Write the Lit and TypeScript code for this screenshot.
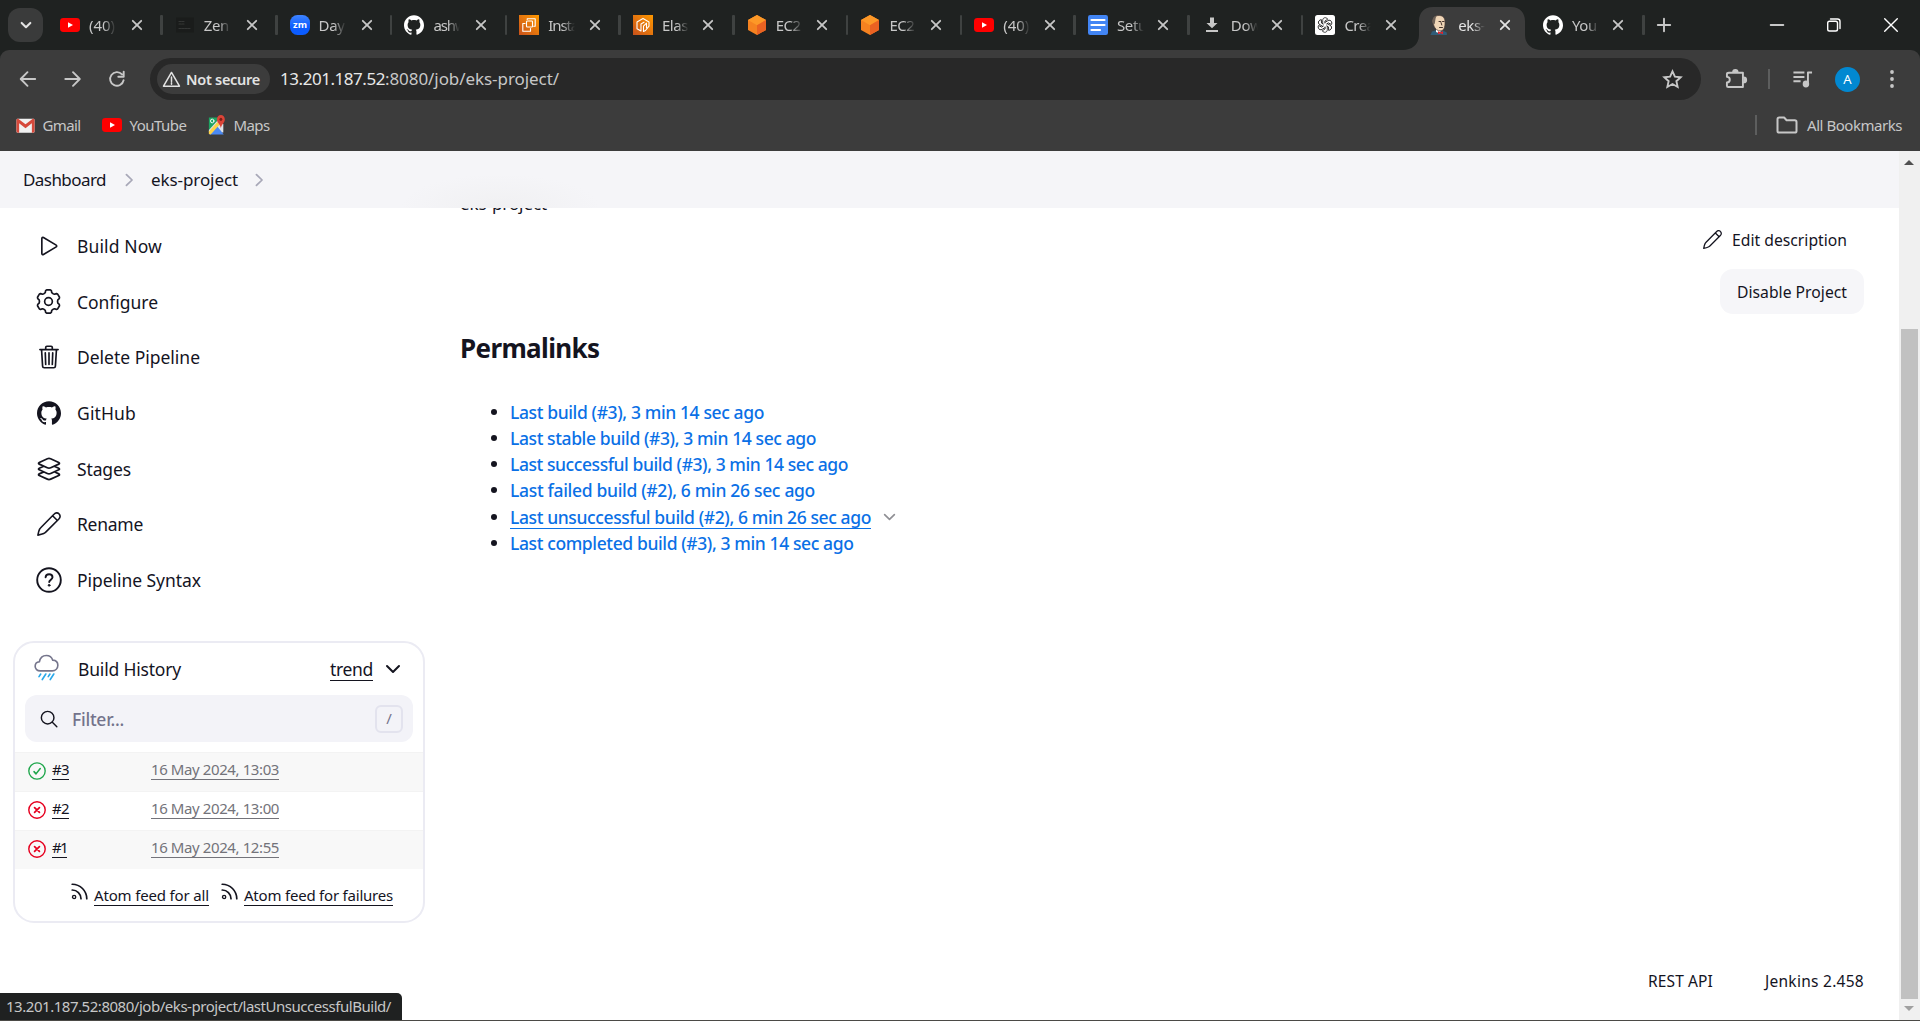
import { LitElement, html, css, svg } from "lit";
import { customElement, property } from "lit/decorators.js";
import { classMap } from "lit/directives/class-map.js";

/* ---------- icons ---------- */

const GITHUB =
  "M12 .297c-6.63 0-12 5.373-12 12 0 5.303 3.438 9.8 8.205 11.385.6.113.82-.258.82-.577 0-.285-.01-1.04-.015-2.04-3.338.724-4.042-1.61-4.042-1.61C4.422 18.07 3.633 17.7 3.633 17.7c-1.087-.744.084-.729.084-.729 1.205.084 1.838 1.236 1.838 1.236 1.07 1.835 2.809 1.305 3.495.998.108-.776.417-1.305.76-1.605-2.665-.3-5.466-1.332-5.466-5.93 0-1.31.465-2.38 1.235-3.22-.135-.303-.54-1.523.105-3.176 0 0 1.005-.322 3.3 1.23.96-.267 1.98-.399 3-.405 1.02.006 2.04.138 3 .405 2.28-1.552 3.285-1.23 3.285-1.23.645 1.653.24 2.873.12 3.176.765.84 1.23 1.91 1.23 3.22 0 4.61-2.805 5.625-5.475 5.92.42.36.81 1.096.81 2.22 0 1.606-.015 2.896-.015 3.286 0 .315.21.69.825.57C20.565 22.092 24 17.592 24 12.297c0-6.627-5.373-12-12-12";

/** Outline of a six-lobed gear centred on (12, 12). */
const gearPath = (() => {
  const pts: Array<[number, number]> = [];
  for (let k = 0; k < 6; k++) {
    const base = k * 60 - 90;
    pts.push([base - 15, 10.7], [base - 9, 11.3], [base + 9, 11.3], [base + 15, 10.7], [base + 20, 9.1], [base + 30, 8.7], [base + 40, 9.1]);
  }
  return (
    pts
      .map(([a, r], i) => {
        const t = (a * Math.PI) / 180;
        return `${i ? "L" : "M"}${(12 + r * Math.cos(t)).toFixed(2)} ${(12 + r * Math.sin(t)).toFixed(2)}`;
      })
      .join("") + "Z"
  );
})();

const pencil = svg`<path d="M.9 23.1C1.3 21 1.7 19 2.6 17.2 3 16.4 3.6 15.8 4.2 15.2L17 2.2C18.600 .5 20.600 .4 22 1.800 23.500 3.200 23.500 5.400 21.900 7L9 19.900C8.300 20.600 7.500 21.200 6.700 21.500 4.900 22.300 3 22.700 .9 23.100ZM15.600 3.700L20.400 8.500"/>`;

const youtube = svg`<rect x="0" y="3" width="20" height="14" rx="3.4" fill="#f00"/><path d="M8 7.200L13 10 8 12.800z" fill="#fff"/>`;
const cube = svg`<path d="M10 0L19 5v10l-9 5-9-5V5z" fill="#f58220"/><path d="M10 0L19 5l-9 5.200L1 5z" fill="#fd9827"/><path d="M10 10.200L19 5v10l-9 5z" fill="#ea6222"/>`;
const awsBg = svg`<linearGradient id="g" x1="0" y1="1" x2="1" y2="0"><stop offset="0" stop-color="#c8511b"/><stop offset="1" stop-color="#f90"/></linearGradient><rect width="20" height="20" fill="url(#g)"/>`;

const ICONS: Record<string, { box: string; art: unknown; line?: number }> = {
  youtube: { box: "0 0 20 20", art: youtube },
  zen: {
    box: "0 0 20 20",
    art: svg`<rect x="1" y="2.500" width="18" height="15" fill="#1a1c1b" stroke="#303231"/><path d="M4 6.500h5M4 9h5M4 13.500h12" stroke="#343635" stroke-width="1.200" stroke-dasharray="2 1"/>`,
  },
  zoom: {
    box: "0 0 20 20",
    art: svg`<linearGradient id="z" x1="0" y1="0" x2="0" y2="1"><stop offset="0" stop-color="#3f84ff"/><stop offset=".6" stop-color="#0b5cff"/></linearGradient><rect width="20" height="20" rx="7.500" fill="url(#z)"/><text x="10" y="13" text-anchor="middle" font-family="Open Sans, sans-serif" font-weight="700" font-size="9.500" fill="#fff">zm</text>`,
  },
  githubLight: { box: "0 0 24 24", art: svg`<path d=${GITHUB} fill="#fff"/>` },
  ec2: {
    box: "0 0 20 20",
    art: svg`${awsBg}<g fill="none" stroke="#fff" stroke-width="1.100"><rect x="7.500" y="6" width="6" height="6" rx=".8"/><path d="M8.200 4.500V3.800h8v7.500h-1.500M6 8.500H3.800v7.700h7.700v-2.700"/></g>`,
  },
  eks: {
    box: "0 0 20 20",
    art: svg`${awsBg}<g fill="none" stroke="#fff" stroke-width="1.100" stroke-linejoin="round"><path d="M8 16L4 13.700V6.900L10 3.500l6 3.400v4.300L12.500 15.500 10.500 16.500V11.200L13.500 8.200v4.500M8 16V9l3-1.800"/></g>`,
  },
  cube: { box: "0 0 20 20", art: cube },
  docs: {
    box: "0 0 20 20",
    art: svg`<rect width="20" height="20" rx="2.200" fill="#4285f4"/><path d="M3.500 5H16.500M3.500 10H16.500M3.500 15H12" stroke="#fff" stroke-width="2.200"/>`,
  },
  download: {
    box: "0 0 20 20",
    art: svg`<path d="M8 2.500h4v5.500h3.500L10 13.300 4.500 8H8zM4 15h12v2H4z" fill="#c7c7c7"/>`,
  },
  gpt: {
    box: "0 0 20 20",
    art: svg`<rect width="20" height="20" rx="2.500" fill="#fff"/><g fill="none" stroke="#222" stroke-width=".85">${[0, 60, 120, 180, 240, 300].map(
      (a) => svg`<path transform="rotate(${a} 10 10)" d="M7.700 8.600V5.500C7.600 3.600 8.900 2.600 10.400 2.700 11.500 2.800 12.300 3.300 12.800 4.200L9.900 6V8"/>`
    )}</g>`,
  },
  jenkins: {
    box: "0 0 20 20",
    art: svg`<path d="M1.500 20L3 16.500 8 15l6 .5 3.800 2V20z" fill="#2f5c78"/><path d="M7 13l5 1.500-1 4-4-1.500z" fill="#fff"/><path d="M3.700 7C3.500 2.500 6.500 .3 10.300 .5 14 .6 16 3 16 7c.2 2.800-.2 5-1.200 7-1 1.800-3.300 2.200-5.300 1.700C6.500 14.600 5 12 4.500 9.500z" fill="#f0d6b7" stroke="#4a3a33" stroke-width=".7"/><path d="M3.600 8C2.800 4 5 .7 8 .6 6.500 2 6.500 4.500 5.800 8.500L4.600 10z" fill="#6f6258"/><path d="M10 6.500h1.800M13.500 6.500h1.500M12 7.500l.8 2.500M10.500 12.500h3" stroke="#33231e" stroke-width=".9"/><path d="M9 16.300l2.500 1 2.500-1v2.900l-2.500-.9-2.500.9z" fill="#e0242b"/>`,
  },
  gmail: {
    box: "0 0 20 20",
    art: svg`<rect x=".5" y="3" width="19" height="14.500" rx="1.300" fill="#f1f1f1"/><path d="M.5 4.500V16a1.500 1.500 0 0 0 1.500 1.500h1.300V7.500L10 12.800l6.700-5.300v10H18a1.500 1.500 0 0 0 1.500-1.500V4.500C19.500 3 18 2.500 17 3.300L10 8.800 3 3.300C2 2.500.5 3 .5 4.500z" fill="#d6493b"/>`,
  },
  maps: {
    box: "0 0 20 20",
    art: svg`<path d="M1 2.500h12L1 16z" fill="#1fa463"/><path d="M1 17.500V15L12 4l5 5v8.500z" fill="#dfe3e8"/><path d="M1.500 19.500L10 11l7.500 8.500z" fill="#4a89f3"/><path d="M1 16.500L10.500 7 13 9.500 3 19.500 1 19z" fill="#fdd247"/><circle cx="4.700" cy="6" r="1.900" fill="none" stroke="#fff" stroke-width="1"/><path d="M14.300 0a4.400 4.400 0 0 1 4.400 4.400c0 3-3.200 4.300-4.400 8.600-1.200-4.300-4.400-5.600-4.400-8.600A4.400 4.400 0 0 1 14.300 0z" fill="#dc4437"/><circle cx="14.300" cy="4.300" r="1.600" fill="#7c1f17"/>`,
  },
  close: { box: "0 0 20 20", line: 2, art: svg`<path d="M5.300 5.300l9.400 9.400M14.700 5.300l-9.400 9.400"/>` },
  plus: { box: "0 0 20 20", line: 1.9, art: svg`<path d="M10 3.800v12.400M3.800 10h12.400"/>` },
  tabSearch: { box: "0 0 20 20", line: 2.3, art: svg`<path d="M5.200 7.700L10 12.500l4.800-4.800"/>` },
  minimize: { box: "0 0 20 20", line: 1.5, art: svg`<path d="M3.500 10h13"/>` },
  restore: { box: "0 0 20 20", line: 1.4, art: svg`<rect x="3.700" y="6.200" width="9.800" height="9.800" rx="1.800"/><path d="M6.500 4h7A2.500 2.500 0 0 1 16 6.500v7"/>` },
  winClose: { box: "0 0 20 20", line: 1.4, art: svg`<path d="M3.700 3.700l12.600 12.600M16.300 3.700L3.700 16.300"/>` },
  back: { box: "0 0 20 20", line: 1.9, art: svg`<path d="M17.200 10H3.500M9.500 3.200L2.700 10l6.800 6.800"/>` },
  forward: { box: "0 0 20 20", line: 1.9, art: svg`<path d="M2.300 10h14.200M10 3.200l6.800 6.800-6.800 6.800"/>` },
  reload: { box: "0 0 20 20", line: 1.9, art: svg`<path d="M16.600 11.300A6.800 6.800 0 1 1 15 5.400M16.700 2.600v5.200h-5.400"/>` },
  warning: { box: "0 0 20 20", line: 1.6, art: svg`<path d="M10 2.600L18.400 17H1.600zM10 7.500v4.600M10 13.500v1.600"/>` },
  star: { box: "0 0 20 20", line: 1.8, art: svg`<path d="M10 2.200l2.300 5.100 5.500.6-4.100 3.700 1.200 5.500L10 14.300l-4.900 2.800 1.200-5.500L2.200 7.900l5.500-.6z" stroke-linejoin="miter"/>` },
  puzzle: {
    box: "0 0 24 24",
    line: 2,
    art: svg`<path d="M4 5h14.700v14.800H3.300c-.8 0-1.300-.5-1.300-1.300v-3.300c1.800-.2 3-1.300 3-3s-1.200-2.800-3-3V6.500C2 5.500 2.500 5 4 5z" /><path d="M8.500 4.300a2.300 2.300 0 0 1 4.600 0M19.500 9.800a2.600 2.600 0 0 1 0 5.200" fill="currentColor"/>`,
  },
  music: {
    box: "0 0 22 20",
    line: 2,
    art: svg`<path d="M1.500 3.500H13M1.500 8H13M1.500 12.300H9M16.700 15V3.600H21" stroke-linecap="butt"/><circle cx="14.600" cy="15" r="2.400" fill="currentColor"/>`,
  },
  dots: { box: "0 0 20 20", art: svg`<g fill="#c7c7c7"><circle cx="10" cy="3" r="1.900"/><circle cx="10" cy="10" r="1.900"/><circle cx="10" cy="17" r="1.900"/></g>` },
  folder: { box: "0 0 22 20", line: 2, art: svg`<path d="M1.500 4.200c0-1 .7-1.700 1.700-1.700h4.900l2.500 2.700h8.200c1 0 1.700.7 1.700 1.700v9c0 1-.7 1.600-1.700 1.600H3.200c-1 0-1.700-.6-1.700-1.600z"/>` },
  crumb: { box: "0 0 10 16", line: 2, art: svg`<path d="M1.600 1.800L7.800 8l-6.200 6.200"/>` },
  play: {
    box: "0 0 512 512",
    line: 32,
    art: svg`<path d="M112 111v290c0 17.440 17 28.520 31 20.160l247.900-148.370c12.120-7.250 12.120-26.330 0-33.580L143 90.840c-14-8.360-31 2.720-31 20.160z" transform="translate(-20 -26) scale(1.100)"/>`,
  },
  gear: { box: "0 0 24 24", line: 1.6, art: svg`<path d=${gearPath}/><circle cx="12" cy="12" r="3.700"/>` },
  trash: {
    box: "24 24 464 464",
    line: 32,
    art: svg`<path d="M112 112l20 320c.95 18.490 14.400 32 32 32h184c17.670 0 30.870-13.510 32-32l20-320M80 112h352M192 112V72a24 24 0 0124-24h80a24 24 0 0124 24v40M256 176v224M184 176l8 224M328 176l-8 224"/>`,
  },
  github: { box: "0 0 24 24", art: svg`<path d=${GITHUB} fill="#14141f"/>` },
  layers: {
    box: "36 36 440 440",
    line: 32,
    art: svg`<path d="M434.800 137.650l-149.360-68.100c-16.190-7.400-42.690-7.400-58.880 0L77.300 137.650c-17.600 8-17.600 21.090 0 29.090l148 67.500c16.890 7.700 44.690 7.700 61.580 0l148-67.500c17.520-8 17.520-21.100-.08-29.090zM160 308.520l-82.700 37.110c-17.600 8-17.600 21.100 0 29.100l148 67.500c16.890 7.690 44.690 7.690 61.580 0l148-67.500c17.600-8 17.600-21.100 0-29.100l-79.940-38.470M160 204.480l-82.800 37.160c-17.600 8-17.600 21.100 0 29.100l148 67.490c16.890 7.700 44.690 7.700 61.580 0l148-67.490c17.700-8 17.700-21.100.1-29.100L352 204.480"/>`,
  },
  pencil: { box: "0 0 24 24", line: 1.6, art: pencil },
  help: {
    box: "0 0 26 26",
    line: 1.9,
    art: svg`<circle cx="13" cy="13" r="11.800"/><path d="M9.600 10.300c.1-1.900 1.600-3 3.500-3 2 0 3.400 1.200 3.400 2.900 0 2.300-3.300 2.600-3.300 4.900"/><circle cx="13.100" cy="18.300" r=".9" fill="currentColor" stroke-width="1"/>`,
  },
  rain: {
    box: "0 0 26 28",
    line: 1.7,
    art: svg`<path d="M6.500 17.500C3.300 17.500 1.200 15.400 1.200 12.700c0-2.600 1.900-4.300 4.400-4.600C6.300 4 9.300 1.500 12.900 1.500c3.200 0 5.600 1.900 6.600 4.900 3.200.2 5.300 2.300 5.300 5.300 0 3.300-2.500 5.800-5.800 5.800z" stroke="#75758c"/><path d="M7 20.800l-1.800 2.700M12.300 20.800L8.600 26.500M16.600 20.800l-1.800 2.700M20.600 20.800l-3.700 5.700" stroke="#2aa8ea"/>`,
  },
  chevron: { box: "0 0 16 10", line: 2, art: svg`<path d="M2 2l6 6 6-6"/>` },
  search: { box: "0 0 20 20", line: 1.6, art: svg`<circle cx="8.500" cy="8.500" r="7"/><path d="M13.700 13.700l5 5"/>` },
  ok: { box: "0 0 20 20", line: 1.5, art: svg`<circle cx="10" cy="10" r="9.100"/><path d="M6.700 10.700l2.200 2.500 4.700-6" stroke-width="1.700"/>` },
  fail: { box: "0 0 20 20", line: 1.6, art: svg`<circle cx="10" cy="10" r="9.100"/><path d="M7.300 7.300l5.400 5.400M12.700 7.300l-5.400 5.400" stroke-width="1.900"/>` },
  rss: {
    box: "0 0 18 18",
    line: 1.8,
    art: svg`<circle cx="3.300" cy="14.800" r="1.700" stroke-width="1.500"/><path d="M1.300 7.400c5.100 0 9.300 4.200 9.300 9.300M1.300 1.300c8.500 0 15.400 6.900 15.400 15.400"/>`,
  },
};

@customElement("ui-icon")
export class UiIcon extends LitElement {
  @property() name = "";
  @property({ type: Number }) w = 20;
  @property({ type: Number }) h = 0;

  static styles = css`
    :host {
      display: inline-flex;
      flex: none;
    }
    svg {
      display: block;
      overflow: visible;
    }
  `;

  render() {
    const icon = ICONS[this.name];
    const lined = icon.line !== undefined;
    return html`<svg
      width=${this.w}
      height=${this.h || this.w}
      viewBox=${icon.box}
      preserveAspectRatio="none"
      fill=${lined ? "none" : "currentColor"}
      stroke=${lined ? "currentColor" : "none"}
      stroke-width=${icon.line ?? 0}
      stroke-linecap="round"
      stroke-linejoin="round"
    >
      ${icon.art}
    </svg>`;
  }
}

/** A single line of text tracked so that it fills exactly `w` pixels. */
@customElement("text-run")
export class TextRun extends LitElement {
  @property() text = "";
  @property({ type: Number }) w = 0;

  static styles = css`
    :host {
      display: inline-block;
      flex: none;
      white-space: nowrap;
    }
    .run {
      display: inline-block;
    }
  `;

  updated() {
    const run = this.renderRoot.querySelector<HTMLElement>(".run");
    if (!run || !this.w) return;
    run.style.letterSpacing = "0px";
    const natural = run.getBoundingClientRect().width;
    const gap = (this.w - natural) / this.text.length;
    run.style.letterSpacing = `${gap.toFixed(3)}px`;
  }

  render() {
    return html`<span class="run">${this.text}</span>`;
  }
}

/* ---------- data ---------- */

const TABS: Array<[string, string, number]> = [
  ["youtube", "(40)", 26],
  ["zen", "Zen", 25],
  ["zoom", "Day", 26],
  ["githubLight", "ashw", 32],
  ["ec2", "Insta", 30],
  ["eks", "Elas", 26],
  ["cube", "EC2", 25],
  ["cube", "EC2", 25],
  ["youtube", "(40)", 26],
  ["docs", "Setu", 30],
  ["download", "Dow", 31],
  ["gpt", "Crea", 30],
  ["jenkins", "eks-", 27],
  ["githubLight", "You", 25],
];
const ACTIVE_TAB = 12;

const TASKS: Array<[string, string, number, number]> = [
  ["play", "Build Now", 85, 24],
  ["gear", "Configure", 81, 25],
  ["trash", "Delete Pipeline", 123, 24],
  ["github", "GitHub", 59, 24],
  ["layers", "Stages", 54, 24],
  ["pencil", "Rename", 66, 24],
  ["help", "Pipeline Syntax", 124, 26],
];

const BUILDS = [
  { icon: "ok", no: "#3", nw: 17, date: "16 May 2024, 13:03" },
  { icon: "fail", no: "#2", nw: 17, date: "16 May 2024, 13:00" },
  { icon: "fail", no: "#1", nw: 15, date: "16 May 2024, 12:55" },
];

const LINKS: Array<[string, number]> = [
  ["Last build (#3), 3 min 14 sec ago", 254],
  ["Last stable build (#3), 3 min 14 sec ago", 306],
  ["Last successful build (#3), 3 min 14 sec ago", 338],
  ["Last failed build (#2), 6 min 26 sec ago", 305],
  ["Last unsuccessful build (#2), 6 min 26 sec ago", 361],
  ["Last completed build (#3), 3 min 14 sec ago", 343.5],
];
const HOVERED_LINK = 4;

/* ---------- browser chrome ---------- */

@customElement("browser-chrome")
export class BrowserChrome extends LitElement {
  static styles = css`
    :host {
      display: block;
      flex: none;
      height: 151px;
      background: #1f2221;
      color: #c7c7c7;
      font-size: 15px;
      line-height: 20px;
      overflow: hidden;
    }
    .strip {
      display: flex;
      height: 50px;
      align-items: center;
    }
    .search {
      display: flex;
      align-items: center;
      justify-content: center;
      width: 35px;
      height: 34px;
      margin: 0 3.500px 0 8px;
      border-radius: 12px;
      background: #3a3b3b;
      color: #e3e3e3;
    }
    .tab {
      position: relative;
      box-sizing: border-box;
      display: flex;
      flex: none;
      align-items: center;
      width: 113.750px;
      height: 50px;
      padding-left: 13.500px;
    }
    .tab:nth-child(-n + 5) {
      width: 114.800px;
    }
    .tab:nth-child(-n + 5) .title {
      margin-right: 7px;
    }
    .title {
      width: 32px;
      margin: 0 5.500px 0 9px;
      white-space: nowrap;
      -webkit-mask-image: linear-gradient(90deg, #000 45%, transparent 84%);
      mask-image: linear-gradient(90deg, #000 45%, transparent 84%);
    }
    .sep {
      position: absolute;
      right: -1.500px;
      top: 15px;
      width: 2.500px;
      height: 20px;
      background: #3f4241;
      border-radius: 1px;
    }
    .bg {
      position: absolute;
      left: -13px;
      top: 7px;
      z-index: 0;
    }
    .tab > ui-icon,
    .tab > .title {
      z-index: 1;
    }
    .tab.active {
      color: #e3e3e3;
    }
    .add {
      margin-left: 11px;
    }
    .window {
      display: flex;
      gap: 37px;
      margin-left: auto;
      padding-right: 19px;
      color: #fff;
    }
    .bars {
      height: 101px;
      background: #3c3c3c;
      border-radius: 9px 9px 0 0;
    }
    .toolbar {
      display: flex;
      align-items: center;
      height: 58px;
      padding-left: 18px;
    }
    .nav {
      display: flex;
      gap: 24.500px;
      width: 132px;
    }
    .omnibox {
      display: flex;
      box-sizing: border-box;
      align-items: center;
      width: 1551px;
      height: 42px;
      padding: 0 18px 0 7px;
      border-radius: 21px;
      background: #282828;
    }
    .chip {
      display: flex;
      box-sizing: border-box;
      align-items: center;
      gap: 5px;
      width: 113px;
      height: 30px;
      padding-left: 5px;
      border-radius: 15px;
      background: #3c3c3c;
      color: #e3e3e3;
      font-size: 14.500px;
      font-weight: 600;
    }
    .url {
      flex: 1;
      padding-left: 10px;
      font-size: 17px;
      line-height: 22px;
    }
    .host {
      color: #e8e8e8;
    }
    .actions {
      display: flex;
      align-items: center;
      padding-left: 24px;
    }
    .rule {
      width: 2px;
      height: 20px;
      background: #5d5e5e;
    }
    .rule.first {
      margin: 0 22px 0 20px;
    }
    .avatar {
      width: 25px;
      height: 25px;
      margin: 0 21.500px 0 22px;
      border-radius: 50%;
      background: #0288d1;
      color: #fff;
      font-size: 13px;
      line-height: 25px;
      text-align: center;
    }
    .bookmarks {
      display: flex;
      align-items: center;
      height: 34px;
      padding: 0 18px 0 15.500px;
    }
    .mark {
      display: flex;
      align-items: center;
      gap: 8px;
      margin-right: 21px;
    }
    .mark text-run,
    .all text-run {
      margin-top: -1px;
    }
    .all {
      display: flex;
      align-items: center;
      margin-left: auto;
      gap: 9px;
    }
    .all .rule {
      margin-right: 10px;
    }
  `;

  render() {
    return html`
      <div class="strip">
        <div class="search"><ui-icon name="tabSearch" w="18"></ui-icon></div>
        ${TABS.map(([icon, title, w], i) => {
          const active = i === ACTIVE_TAB;
          return html`<div class=${classMap({ tab: true, active })}>
            ${active
              ? html`<svg class="bg" width="140" height="43" viewBox="0 0 140 43">
                  <path
                    d="M0 43C8 43 16 38 16 28V14C16 6 21 0 30 0H108C117 0 122 6 122 14V28C122 38 130 43 138 43z"
                    fill="#3c3c3c"
                  />
                </svg>`
              : null}
            <ui-icon name=${icon} w="20"></ui-icon>
            <span class="title"><text-run text=${title} w=${w}></text-run></span>
            <ui-icon name="close" w="18"></ui-icon>
            ${active || i === ACTIVE_TAB - 1 ? null : html`<i class="sep"></i>`}
          </div>`;
        })}
        <ui-icon class="add" name="plus" w="20"></ui-icon>
        <div class="window">
          <ui-icon name="minimize" w="20"></ui-icon>
          <ui-icon name="restore" w="20"></ui-icon>
          <ui-icon name="winClose" w="20"></ui-icon>
        </div>
      </div>
      <div class="bars">
        <div class="toolbar">
          <div class="nav">
            <ui-icon name="back" w="20"></ui-icon>
            <ui-icon name="forward" w="20"></ui-icon>
            <ui-icon name="reload" w="20"></ui-icon>
          </div>
          <div class="omnibox">
            <div class="chip"><ui-icon name="warning" w="19"></ui-icon><text-run text="Not secure" w="74"></text-run></div>
            <div class="url"
              ><text-run class="host" text="13.201.187.52" w="105"></text-run
              ><text-run text=":8080/job/eks-project/" w="174"></text-run
            ></div>
            <ui-icon name="star" w="21"></ui-icon>
          </div>
          <div class="actions">
            <ui-icon name="puzzle" w="23"></ui-icon>
            <i class="rule first"></i>
            <ui-icon name="music" w="21" h="20"></ui-icon>
            <span class="avatar">A</span>
            <ui-icon name="dots" w="20"></ui-icon>
          </div>
        </div>
        <div class="bookmarks">
          <div class="mark"><ui-icon name="gmail" w="19"></ui-icon><text-run text="Gmail" w="38"></text-run></div>
          <div class="mark"><ui-icon name="youtube" w="20"></ui-icon><text-run text="YouTube" w="57"></text-run></div>
          <div class="mark"><ui-icon name="maps" w="18" h="20"></ui-icon><text-run text="Maps" w="36"></text-run></div>
          <div class="all">
            <i class="rule"></i>
            <ui-icon name="folder" w="22" h="20"></ui-icon>
            <text-run text="All Bookmarks" w="95"></text-run>
          </div>
        </div>
      </div>
    `;
  }
}

/* ---------- build history card ---------- */

@customElement("build-history")
export class BuildHistory extends LitElement {
  static styles = css`
    :host {
      box-sizing: border-box;
      display: block;
      width: 412px;
      height: 282px;
      border: 2px solid #ebebf3;
      border-radius: 21px;
      font-size: 15px;
      line-height: 20px;
    }
    .head {
      display: flex;
      align-items: center;
      height: 52px;
      padding: 0 22px 0 19px;
      font-size: 17.500px;
      line-height: 22px;
    }
    .head .rain {
      margin-bottom: 3px;
    }
    .head .name {
      margin-left: 19px;
    }
    .head .trend {
      margin-left: auto;
      margin-right: 12px;
    }
    .u {
      border-bottom: 1px solid currentColor;
    }
    .filter {
      display: flex;
      box-sizing: border-box;
      align-items: center;
      width: 388px;
      height: 47px;
      margin: 0 0 10px 10px;
      padding: 0 10px 0 15px;
      border-radius: 12px;
      background: #f3f3f8;
    }
    .hint {
      flex: 1;
      padding: 0 0 0 14px;
      color: #73738c;
      font-size: 17.500px;
      font-weight: 500;
      line-height: 22px;
    }
    .key {
      box-sizing: border-box;
      width: 28px;
      height: 28px;
      border: 2px solid #e3e3ee;
      border-radius: 6px;
      color: #73738c;
      line-height: 23px;
      text-align: center;
    }
    .row {
      display: flex;
      box-sizing: border-box;
      align-items: center;
      height: 39px;
      padding-left: 13px;
      border-top: 1px solid #f3f3f3;
    }
    .row:nth-child(odd) {
      background: #f8f8f8;
    }
    .row ui-icon {
      margin-bottom: 2px;
    }
    .ok {
      color: #1ea64b;
    }
    .fail {
      color: #e6001f;
    }
    .no {
      display: flex;
      width: 99px;
      padding-left: 6px;
    }
    .row .u {
      line-height: 19px;
      margin-top: -4px;
    }
    .date {
      color: #73737a;
    }
    .feeds {
      display: flex;
      padding: 14px 0 0 56px;
      gap: 12px;
    }
    .feed {
      display: flex;
      gap: 6px;
    }
    .feed .u {
      margin-top: 2px;
      line-height: 20px;
    }
  `;

  render() {
    return html`
      <div class="head">
        <ui-icon class="rain" name="rain" w="25" h="27"></ui-icon>
        <text-run class="name" text="Build History" w="103"></text-run>
        <text-run class="trend u" text="trend" w="43"></text-run>
        <ui-icon name="chevron" w="16" h="10"></ui-icon>
      </div>
      <div class="filter">
        <ui-icon name="search" w="18"></ui-icon>
        <span class="hint"><text-run text="Filter..." w="52"></text-run></span>
        <span class="key">/</span>
      </div>
      <div>
        ${BUILDS.map(
          (b) => html`<div class="row">
            <ui-icon class=${b.icon} name=${b.icon} w="18"></ui-icon>
            <span class="no"><text-run class="u" text=${b.no} w=${b.nw}></text-run></span>
            <text-run class="date u" text=${b.date} w="128"></text-run>
          </div>`
        )}
      </div>
      <div class="feeds">
        <div class="feed"><ui-icon name="rss" w="17"></ui-icon><text-run class="u" text="Atom feed for all" w="115"></text-run></div>
        <div class="feed"><ui-icon name="rss" w="17"></ui-icon><text-run class="u" text="Atom feed for failures" w="149"></text-run></div>
      </div>
    `;
  }
}

/* ---------- page ---------- */

@customElement("app-root")
export class AppRoot extends LitElement {
  static styles = css`
    :host {
      position: relative;
      display: flex;
      box-sizing: border-box;
      flex-direction: column;
      width: 100%;
      height: 1021px;
      overflow: hidden;
      border-bottom: 1px solid #4b4a46;
      background: #fff;
      color: #14141f;
      font-family: "Noto Sans", "Open Sans", sans-serif;
      font-stretch: 90%;
    }
    .view {
      display: flex;
      flex: 1;
      min-height: 0;
    }
    .page {
      display: flex;
      flex-direction: column;
      width: 1899px;
    }
    .crumbs {
      display: flex;
      box-sizing: border-box;
      align-items: center;
      height: 57px;
      padding: 1px 0 0 23px;
      background: radial-gradient(100px 34px at 500px 57px, #f0f0f2, #f5f5f8);
      font-size: 17px;
      line-height: 22px;
      flex: none;
    }
    .crumbs ui-icon {
      margin: 0 17px 0 19px;
      color: #a8a8b8;
    }
    .crumbs .last {
      margin-left: 17px;
    }
    .body {
      display: flex;
      flex: 1;
    }
    .side {
      width: 460px;
      flex: none;
      font-size: 17.500px;
    }
    .tasks {
      display: grid;
      grid-auto-rows: 55.700px;
      padding: 10.200px 0 0 35px;
      height: 433px;
      box-sizing: border-box;
      align-items: center;
      align-content: start;
    }
    .task {
      display: flex;
      align-items: center;
      height: 56px;
    }
    .slot {
      display: flex;
      justify-content: center;
      width: 27px;
      margin-right: 15px;
    }
    .side build-history {
      margin-left: 13px;
    }
    .main {
      display: flex;
      flex-direction: column;
      flex: 1;
      padding-right: 35px;
    }
    .top {
      display: flex;
      justify-content: space-between;
      height: 106px;
      overflow: hidden;
    }
    .desc {
      margin-top: -16.500px;
      font-size: 17px;
      line-height: 24px;
    }
    .buttons {
      display: flex;
      flex-direction: column;
      align-items: flex-end;
      font-size: 15.700px;
      line-height: 22px;
    }
    .edit {
      display: flex;
      align-items: center;
      gap: 10px;
      height: 24px;
      padding: 20px 17px 17px 0;
    }
    .edit ui-icon {
      margin-bottom: 2px;
    }
    .disable {
      display: flex;
      box-sizing: border-box;
      justify-content: center;
      width: 144px;
      height: 45px;
      padding-top: 12px;
      border-radius: 13px;
      background: #f6f6f9;
    }
    h2 {
      margin: 16px 0 0;
      font-size: 26px;
      font-weight: 700;
      line-height: 36px;
    }
    ul {
      margin: 33px 0 0;
      padding: 0;
      list-style: none;
      font-size: 17.500px;
      font-weight: 500;
      line-height: 26px;
      color: #0a70e6;
    }
    li {
      display: flex;
      align-items: center;
      height: 26px;
      padding-left: 31px;
    }
    li text-run {
      height: 26px;
      line-height: 27px;
    }
    .dot {
      width: 6px;
      height: 6px;
      margin-right: 13px;
      border-radius: 50%;
      background: #14141f;
    }
    li.hover {
      height: 27px;
      padding-top: 1px;
      box-sizing: border-box;
    }
    li.hover text-run {
      height: 23px;
      line-height: 25px;
      border-bottom: 1px solid currentColor;
    }
    li ui-icon {
      margin-left: 12px;
      color: #8f8f94;
    }
    footer {
      display: flex;
      justify-content: flex-end;
      gap: 52px;
      margin-top: auto;
      padding-bottom: 27px;
      font-size: 15.500px;
      line-height: 24px;
    }
    .scroll {
      display: flex;
      flex-direction: column;
      align-items: center;
      flex: 1;
      background: #f0f0f0;
    }
    .thumb {
      width: 17px;
      height: 670px;
      margin-right: 1px;
      background: #c1c1c1;
    }
    .arrow {
      width: 0;
      height: 0;
      border: 5px solid transparent;
    }
    .up {
      margin: 4px 1px 164px 0;
      border-bottom-color: #505050;
    }
    .down {
      margin: 7px 1px 0 0;
      border-top-color: #a0a0a0;
    }
    .status {
      position: absolute;
      left: 0;
      bottom: 0;
      box-sizing: border-box;
      width: 402px;
      height: 27px;
      padding: 3px 0 0 6px;
      border-radius: 0 5px 0 0;
      background: #1f2121;
      color: #c7c7c7;
      font-size: 15px;
      line-height: 20px;
    }
  `;

  render() {
    return html`
      <browser-chrome></browser-chrome>
      <div class="view">
        <div class="page">
          <nav class="crumbs">
            <text-run text="Dashboard" w="83"></text-run>
            <ui-icon name="crumb" w="9" h="14"></ui-icon>
            <text-run text="eks-project" w="87"></text-run>
            <ui-icon class="last" name="crumb" w="9" h="14"></ui-icon>
          </nav>
          <div class="body">
            <div class="side">
              <div class="tasks">
                ${TASKS.map(
                  ([icon, label, w, size]) => html`<div class="task">
                    <span class="slot"><ui-icon name=${icon} w=${size}></ui-icon></span>
                    <text-run text=${label} w=${w}></text-run>
                  </div>`
                )}
              </div>
              <build-history></build-history>
            </div>
            <div class="main">
              <div class="top">
                <text-run class="desc" text="eks-project" w="87"></text-run>
                <div class="buttons">
                  <div class="edit"><ui-icon name="pencil" w="19"></ui-icon><text-run text="Edit description" w="115"></text-run></div>
                  <div class="disable"><text-run text="Disable Project" w="110"></text-run></div>
                </div>
              </div>
              <h2><text-run text="Permalinks" w="139.5"></text-run></h2>
              <ul>
                ${LINKS.map(
                  ([label, w], i) => html`<li class=${classMap({ hover: i === HOVERED_LINK })}>
                    <i class="dot"></i>
                    <text-run text=${label} w=${w}></text-run>
                    ${i === HOVERED_LINK ? html`<ui-icon name="chevron" w="13" h="8"></ui-icon>` : null}
                  </li>`
                )}
              </ul>
              <footer>
                <text-run text="REST API" w="65"></text-run>
                <text-run text="Jenkins 2.458" w="99"></text-run>
              </footer>
            </div>
          </div>
        </div>
        <div class="scroll">
          <i class="arrow up"></i>
          <i class="thumb"></i>
          <i class="arrow down"></i>
        </div>
      </div>
      <div class="status"><text-run text="13.201.187.52:8080/job/eks-project/lastUnsuccessfulBuild/" w="385"></text-run></div>
    `;
  }
}
